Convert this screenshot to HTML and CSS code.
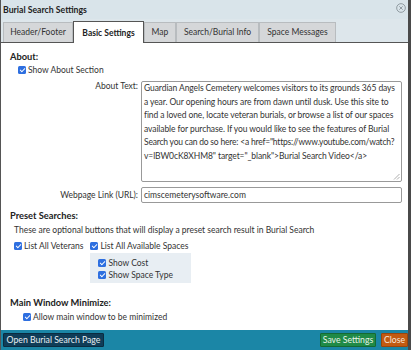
FILE: index.html
```html
<!DOCTYPE html>
<html>
<head>
<meta charset="utf-8">
<link rel="stylesheet" href="styles.css">
</head>
<body>
<div class="dialog">
  <div class="titlebar">
    <span class="title">Burial Search Settings</span>
    <svg class="closeicon" width="10" height="10" viewBox="0 0 12 12"><circle cx="6" cy="6" r="5.2" fill="none" stroke="#8a949a" stroke-width="1.1"/><path d="M4 4L8 8M8 4L4 8" stroke="#8a949a" stroke-width="1.1"/></svg>
  </div>
  <div class="tabs">
    <div class="tab t1">Header/Footer</div>
    <div class="tab t2 active">Basic Settings</div>
    <div class="tab t3">Map</div>
    <div class="tab t4">Search/Burial Info</div>
    <div class="tab t5">Space Messages</div>
  </div>
  <div class="content">
    <div class="section-title">About:</div>
    <label class="check indent"><span class="cb"></span>Show About Section</label>
    <div class="field">
      <div class="flabel">About Text:</div>
      <div class="textarea"><span class="ln">Guardian Angels Cemetery welcomes visitors to its grounds 365 days</span><span class="ln">a year. Our opening hours are from dawn until dusk. Use this site to</span><span class="ln">find a loved one, locate veteran burials, or browse a list of our spaces</span><span class="ln">available for purchase. If you would like to see the features of Burial</span><span class="ln tight">Search you can do so here: &lt;a href="https://www.youtube.com/watch?</span><span class="ln">v=lBW0cK8XHM8" target="_blank"&gt;Burial Search Video&lt;/a&gt;</span><svg class="grip" width="7" height="7" viewBox="0 0 7 7"><path d="M6.5 1L1 6.5M6.5 4L4 6.5" stroke="#999" stroke-width="0.8"/></svg></div>
    </div>
    <div class="field url">
      <div class="flabel">Webpage Link (URL):</div>
      <div class="input">cimscemeterysoftware.com</div>
    </div>
    <div class="section-title s2">Preset Searches:</div>
    <div class="note">These are optional buttons that will display a preset search result in Burial Search</div>
    <div class="presets">
      <label class="check"><span class="cb"></span>List All Veterans</label>
      <div class="group">
        <label class="check"><span class="cb"></span>List All Available Spaces</label>
        <div class="subbox">
          <label class="check"><span class="cb"></span>Show Cost</label>
          <label class="check"><span class="cb"></span>Show Space Type</label>
        </div>
      </div>
    </div>
    <div class="section-title s3">Main Window Minimize:</div>
    <label class="check indent2"><span class="cb"></span>Allow main window to be minimized</label>
  </div>
  <div class="footer">
    <div class="btn open">Open Burial Search Page</div>
    <div class="right">
      <div class="btn save">Save Settings</div>
      <div class="btn close">Close</div>
    </div>
  </div>
</div>
</body>
</html>
```

FILE: styles.css
```css
* { box-sizing: border-box; }
html, body { margin: 0; padding: 0; }
body {
  font-family: Lato, "Open Sans", sans-serif;
  font-size: 8.5px;
  color: #333;
  background: #fff;
  width: 411px;
  height: 350px;
  overflow: hidden;
}
.dialog {
  width: 411px;
  height: 350px;
  border-left: 1px solid #555;
  border-right: 3px solid #4a4a4a;
  display: flex;
  flex-direction: column;
  background: #dde6eb;
}
.titlebar {
  height: 19px;
  flex: none;
  display: flex;
  align-items: center;
  justify-content: space-between;
  padding: 0 2px 0 2px;
  background: #d9e4ea;
}
.title { font-weight: bold; font-size: 8.7px; color: #222; }
.closeicon { margin-top: -3px; }
.tabs {
  display: flex;
  align-items: flex-end;
  height: 24px;
  flex: none;
  padding-left: 2px;
  border-bottom: 1px solid #555;
  background: #dde6eb;
}
.tab {
  height: 20px;
  display: flex;
  align-items: center;
  justify-content: center;
  background: #d5d7d9;
  border: 1px solid #b8bcbf;
  border-bottom: none;
  color: #333;
  padding-bottom: 1px;
}
.t1 { width: 70px; }
.t2 { width: 71px; }
.t3 { width: 32px; }
.t4 { width: 83px; }
.t5 { width: 77px; }
.tab.active {
  height: 22px;
  background: #fff;
  border: 1px solid #555;
  border-bottom: none;
  margin-bottom: -1px;
  font-weight: bold;
  color: #222;
  padding-top: 2px;
}
.content {
  flex: 1;
  background: #fff;
  padding: 8px 6px 0 9px;
  display: flex;
  flex-direction: column;
}
.section-title {
  font-weight: bold;
  font-size: 9.3px;
  color: #222;
  line-height: 12px;
}
.section-title.s2 { margin-top: 7px; }
.section-title.s3 { margin-top: 14px; }
.check {
  display: flex;
  align-items: center;
  line-height: 12px;
  gap: 2px;
  color: #333;
}
.cb {
  width: 8px;
  height: 8px;
  border-radius: 1.5px;
  background: #2e6fe0;
  position: relative;
  flex: none;
}
.cb::after {
  content: "";
  position: absolute;
  left: 2.5px;
  top: 0.8px;
  width: 2px;
  height: 4.2px;
  border: solid #fff;
  border-width: 0 1.2px 1.2px 0;
  transform: rotate(45deg);
}
.indent { margin-left: 8px; margin-top: 1px; }
.indent2 { margin-left: 13px; margin-top: 2px; }
.field {
  display: flex;
  align-items: flex-start;
  margin-top: 5px;
}
.flabel {
  width: 131px;
  text-align: right;
  padding-right: 3px;
  padding-top: 0;
  line-height: 11px;
  color: #333;
  flex: none;
}
.textarea {
  position: relative;
  width: 262px;
  height: 101px;
  border: 1px solid #999;
  border-radius: 2px;
  padding: 0 1px 0 2px;
  line-height: 13.6px;
  letter-spacing: -0.08px;
  color: #333;
  overflow: hidden;
}
.ln { display: block; white-space: nowrap; }
.ln.tight { letter-spacing: -0.2px; }
.grip { position: absolute; right: 1px; bottom: 1px; }
.field.url { margin-top: 5px; align-items: center; }
.input {
  width: 262px;
  height: 16px;
  border: 1px solid #999;
  border-radius: 2px;
  padding: 0 2px;
  line-height: 14px;
}
.note { margin-left: 4px; margin-top: 2px; line-height: 12px; }
.presets {
  display: flex;
  align-items: flex-start;
  margin-top: 4px;
  margin-left: 4px;
  gap: 7px;
}
.group { display: flex; flex-direction: column; }
.subbox {
  margin-top: 1px;
  background: #e8eef3;
  padding: 4px 8px 2px 8px;
  display: flex;
  flex-direction: column;
  width: 101px;
}
.footer {
  height: 20px;
  flex: none;
  background: #1b86a6;
  display: flex;
  align-items: center;
  justify-content: space-between;
  padding: 0 0 0 2px;
}
.right { display: flex; gap: 5px; }
.btn {
  height: 14px;
  line-height: 12px;
  padding: 0;
  text-align: center;
  white-space: nowrap;
  font-size: 8.7px;
  border-radius: 1px;
}
.btn.open { background: #0f3d58; color: #e8eef2; border: 1px solid #0a2c40; width: 101px; }
.btn.save { background: #1f8a47; color: #e8f4ea; border: 1px solid #156a33; width: 56px; }
.btn.close { background: #c25a12; color: #f7e7dc; border: 1px solid #9a460c; width: 27px; }
```
